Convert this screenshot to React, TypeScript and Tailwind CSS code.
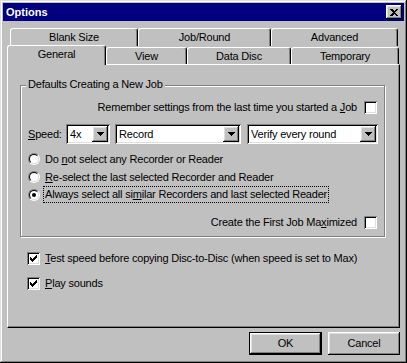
import React from "react";

const RAISED =
  "shadow-[inset_-1px_-1px_0_#000,inset_1px_1px_0_#fff,inset_-2px_-2px_0_#808080,inset_2px_2px_0_#dfdfdf]";
const SUNKEN =
  "shadow-[inset_1px_1px_0_#808080,inset_-1px_-1px_0_#fff,inset_2px_2px_0_#000,inset_-2px_-2px_0_#dfdfdf]";

function CheckMark() {
  const px: [number, number][] = [
    [6, 0],
    [5, 1], [6, 1],
    [0, 2], [4, 2], [5, 2], [6, 2],
    [0, 3], [1, 3], [3, 3], [4, 3], [5, 3],
    [0, 4], [1, 4], [2, 4], [3, 4], [4, 4],
    [1, 5], [2, 5], [3, 5],
    [2, 6],
  ];
  return (
    <svg width="7" height="7" viewBox="0 0 7 7" shapeRendering="crispEdges">
      {px.map(([x, y], i) => (
        <rect key={i} x={x} y={y} width="1" height="1" fill="#000" />
      ))}
    </svg>
  );
}

function Check({ checked }: { checked?: boolean }) {
  return (
    <div className={`w-[13px] h-[13px] shrink-0 bg-white flex items-center justify-center ${SUNKEN}`}>
      {checked && <CheckMark />}
    </div>
  );
}

function Radio({ checked }: { checked?: boolean }) {
  return (
    <div className="w-[12px] h-[12px] shrink-0 rounded-full border border-t-[#808080] border-l-[#808080] border-b-white border-r-white">
      <div className="w-full h-full rounded-full border border-t-black border-l-black border-b-[#dfdfdf] border-r-[#dfdfdf] bg-white flex items-center justify-center">
        {checked && <div className="w-[4px] h-[4px] rounded-full bg-black" />}
      </div>
    </div>
  );
}

function Arrow() {
  return (
    <svg width="7" height="4" viewBox="0 0 7 4" shapeRendering="crispEdges">
      <rect x="0" y="0" width="7" height="1" fill="#000" />
      <rect x="1" y="1" width="5" height="1" fill="#000" />
      <rect x="2" y="2" width="3" height="1" fill="#000" />
      <rect x="3" y="3" width="1" height="1" fill="#000" />
    </svg>
  );
}

function Combo({ value, className }: { value: string; className: string }) {
  return (
    <div className={`h-[20px] bg-white flex items-center justify-between ${SUNKEN} ${className}`}>
      <span className="pl-[4px]">{value}</span>
      <div className={`w-[16px] h-[16px] mr-[2px] bg-[#c0c0c0] flex items-center justify-center ${RAISED}`}>
        <Arrow />
      </div>
    </div>
  );
}

const TAB =
  "flex items-center justify-center bg-[#c0c0c0] border-t border-l border-white border-r border-r-black rounded-t-[3px] shadow-[inset_-1px_0_0_#808080]";

export default function App() {
  return (
    <div className="w-[407px] h-[363px] bg-[#c0c0c0] p-[3px] flex flex-col font-['Liberation_Sans',Arial,sans-serif] text-[11px] tracking-[-0.2px] leading-none text-black shadow-[inset_-1px_-1px_0_#000,inset_1px_1px_0_#dfdfdf,inset_-2px_-2px_0_#808080,inset_2px_2px_0_#fff]">
      {/* Title bar */}
      <div className="h-[18px] bg-[#000080] flex items-center justify-between pl-[3px] pr-[2px]">
        <span className="text-white font-bold text-[11px] tracking-normal">Options</span>
        <div className={`w-[16px] h-[14px] bg-[#c0c0c0] flex items-center justify-center ${RAISED}`}>
          <svg width="8" height="7" viewBox="0 0 8 7" shapeRendering="crispEdges">
            <path d="M0 0h2l2 2 2-2h2L5 3.5 8 7H6L4 5 2 7H0l3-3.5z" fill="#000" />
          </svg>
        </div>
      </div>

      <div className="px-[4px] pt-[7px] flex flex-col">
        {/* Tab row 1 */}
        <div className="flex h-[17px] pl-[3px]">
          <div className={`${TAB} w-[128px] h-[18px]`}>Blank Size</div>
          <div className={`${TAB} w-[133px] h-[18px]`}>Job/Round</div>
          <div className={`${TAB} w-[127px] h-[18px]`}>Advanced</div>
        </div>
        {/* Tab row 2 */}
        <div className="flex items-start h-[19px]">
          <div className={`${TAB} relative z-10 w-[99px] h-[20px] pb-[3px]`}>General</div>
          <div className={`${TAB} w-[81px] h-[17px] mt-[2px]`}>View</div>
          <div className={`${TAB} w-[104px] h-[17px] mt-[2px]`}>Data Disc</div>
          <div className={`${TAB} w-[108px] h-[17px] mt-[2px]`}>Temporary</div>
        </div>

        {/* Panel */}
        <div className="h-[264px] border border-t-white border-l-white border-r-black border-b-black shadow-[inset_-1px_-1px_0_#808080] pt-[20px] pl-[12px] flex flex-col">
          {/* Group box */}
          <div className="relative w-[365px] h-[152px] border border-[#808080] shadow-[1px_1px_0_#fff,inset_1px_1px_0_#fff] flex flex-col">
            <span className="absolute left-[5px] -top-[7px] bg-[#c0c0c0] px-[2px]">
              Defaults Creating a New Job
            </span>

            <div className="mt-[15px] h-[13px] flex items-center justify-end pr-[7px] gap-[7px]">
              <span>
                Remember settings from the last time you started a <u>J</u>ob
              </span>
              <Check />
            </div>

            <div className="mt-[10px] h-[20px] flex items-center pl-[7px]">
              <span className="w-[38px]">
                <u>S</u>peed:
              </span>
              <Combo value="4x" className="w-[44px]" />
              <Combo value="Record" className="w-[126px] ml-[5px]" />
              <Combo value="Verify every round" className="w-[131px] ml-[6px]" />
            </div>

            <div className="mt-[6px] flex flex-col pl-[7px]">
              <div className="h-[18px] flex items-center gap-[5px]">
                <Radio />
                <span>
                  Do <u>n</u>ot select any Recorder or Reader
                </span>
              </div>
              <div className="h-[18px] flex items-center gap-[5px]">
                <Radio />
                <span>
                  <u>R</u>e-select the last selected Recorder and Reader
                </span>
              </div>
              <div className="h-[17px] flex items-center gap-[4px]">
                <Radio checked />
                <span className="outline-1 outline-dotted outline-black px-[1px] py-[2px]">
                  Always select all si<u>m</u>ilar Recorders and last selected Reader
                </span>
              </div>
            </div>

            <div className="mt-[13px] h-[13px] flex items-center justify-end pr-[7px] gap-[7px]">
              <span>
                Create the First Job Ma<u>x</u>imized
              </span>
              <Check />
            </div>
          </div>

          <div className="ml-[7px] mt-[15px] h-[13px] flex items-center gap-[5px]">
            <Check checked />
            <span>
              <u>T</u>est speed before copying Disc-to-Disc (when speed is set to Max)
            </span>
          </div>
          <div className="ml-[7px] mt-[12px] h-[13px] flex items-center gap-[5px]">
            <Check checked />
            <span>
              <u>P</u>lay sounds
            </span>
          </div>
        </div>

        {/* Buttons */}
        <div className="mt-[4px] flex justify-end gap-[6px]">
          <div className="w-[73px] h-[23px] border border-black">
            <div className={`w-full h-full flex items-center justify-center ${RAISED}`}>OK</div>
          </div>
          <div className={`w-[72px] h-[23px] flex items-center justify-center ${RAISED}`}>Cancel</div>
        </div>
      </div>
    </div>
  );
}
